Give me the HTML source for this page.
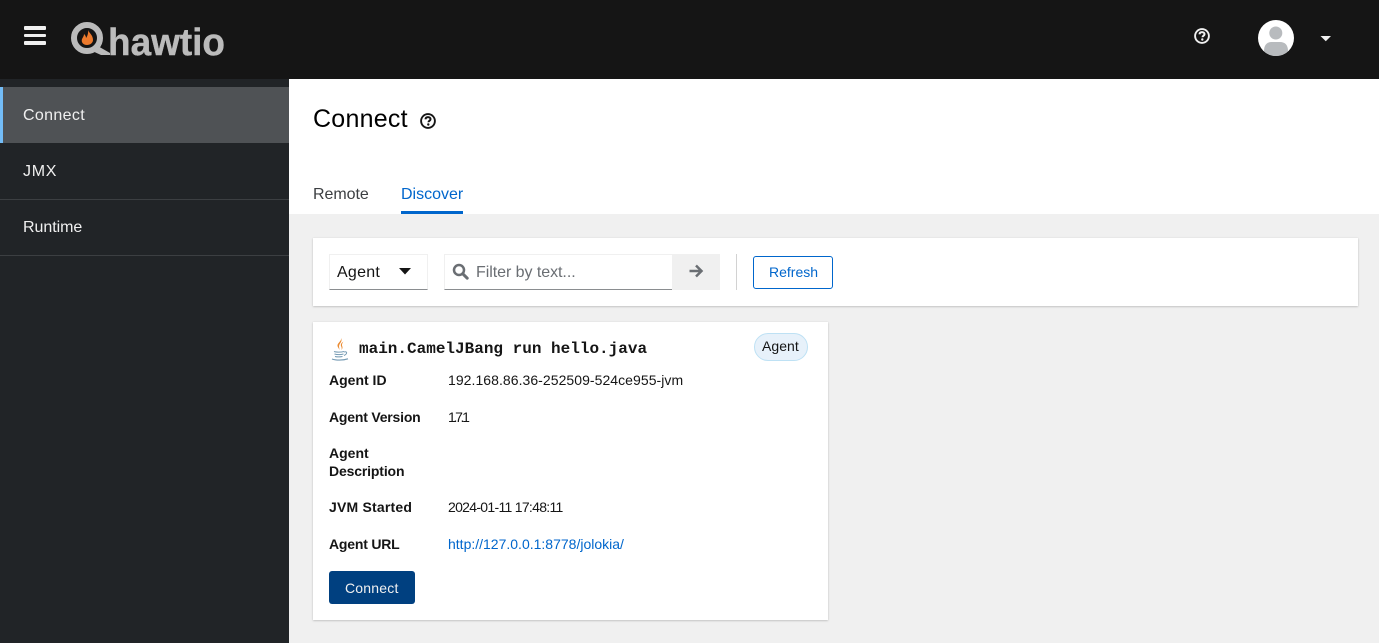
<!DOCTYPE html>
<html><head><meta charset="utf-8"><title>Hawtio Connect</title>
<style>
html,body{margin:0;padding:0}
body{width:1379px;height:643px;overflow:hidden;background:#f0f0f0;position:relative;font-family:"Liberation Sans",sans-serif;color:#151515}
.a{position:absolute;box-sizing:border-box}
.t{position:absolute;white-space:nowrap;line-height:20px;font-size:14px}
.b{font-weight:bold}
.n{color:#f0f0f0;font-size:16px;letter-spacing:.35px;left:23px;line-height:24px}
svg{position:absolute;overflow:visible}
</style></head><body>
<div class="a" style="left:0;top:0;width:1379px;height:79px;background:#151515"></div>
<div class="a" style="left:24px;top:26px;width:22px;height:3.5px;background:#f0f0f0;border-radius:1px"></div>
<div class="a" style="left:24px;top:33.5px;width:22px;height:3.5px;background:#f0f0f0;border-radius:1px"></div>
<div class="a" style="left:24px;top:41px;width:22px;height:3.5px;background:#f0f0f0;border-radius:1px"></div>

<svg style="left:0;top:0" width="300" height="79">
<circle cx="87" cy="38" r="13" fill="none" stroke="#bbb" stroke-width="6"/>
<path d="M96 45L110 53V55H101L90 50Z" fill="#bbb"/>
<path d="M88 30C89 33 93 35 93 40C93 43 90 45 87 45C83 45 81 42 82 39C83 37 84 36 84 34C85.500 35.500 86 36.500 86 38C87.500 36 88.500 33 88 30Z" fill="#ec7a2d"/>
<text x="108" y="55" font-family="Liberation Sans" font-weight="bold" font-size="38" fill="#bbb" stroke="#bbb" stroke-width=".4" textLength="117" lengthAdjust="spacingAndGlyphs">hawtio</text>
</svg>

<svg style="left:1194px;top:28px" width="16" height="16" viewBox="0 0 16 16">
<circle cx="8" cy="8" r="6.900" fill="none" stroke="#f0f0f0" stroke-width="1.900"/>
<path d="M5.500 6.300C5.600 4.800 6.700 4.100 8 4.100C9.400 4.100 10.500 4.900 10.500 6.200C10.500 7.700 8.500 7.700 8.500 9.300" fill="none" stroke="#f0f0f0" stroke-width="2"/>
<circle cx="8.300" cy="11.500" r="1.200" fill="#f0f0f0"/>
</svg>
<svg style="left:1258px;top:20px" width="36" height="36" viewBox="0 0 36 36">
<circle cx="18" cy="18" r="18" fill="#fff"/>
<circle cx="17.800" cy="13" r="6.500" fill="#b8bbbe"/>
<path d="M6 31C6 25 9 22 14 22H22C27 22 30 25 30 31C27 34.500 22 36 18 36C14 36 9 34.500 6 31Z" fill="#b8bbbe"/>
</svg>
<svg style="left:1320px;top:36px" width="12" height="6"><path d="M.5 0H11L5.800 5.200Z" fill="#f0f0f0"/></svg>

<div class="a" style="left:0;top:79px;width:289px;height:564px;background:#212427"></div>
<div class="a" style="left:0;top:87px;width:289px;height:56px;background:#4f5255;border-left:3px solid #73bcf7"></div>
<div class="a" style="left:0;top:199px;width:289px;height:1px;background:#3c3f42"></div>
<div class="a" style="left:0;top:255px;width:289px;height:1px;background:#3c3f42"></div>
<div class="t n" style="top:104px">Connect</div>
<div class="t n" style="top:160px;letter-spacing:.7px">JMX</div>
<div class="t n" style="top:216px;letter-spacing:-.05px">Runtime</div>

<div class="a" style="left:289px;top:79px;width:1090px;height:135px;background:#fff"></div>
<div class="t" style="left:313px;top:104px;font-size:25px;line-height:30px;letter-spacing:.25px;color:#000">Connect</div>
<svg style="left:420px;top:113px" width="16" height="16" viewBox="0 0 16 16">
<circle cx="8" cy="8" r="6.900" fill="none" stroke="#151515" stroke-width="1.900"/>
<path d="M5.500 6.300C5.600 4.800 6.700 4.100 8 4.100C9.400 4.100 10.500 4.900 10.500 6.200C10.500 7.700 8.500 7.700 8.500 9.300" fill="none" stroke="#151515" stroke-width="2"/>
<circle cx="8.300" cy="11.500" r="1.200" fill="#151515"/>
</svg>
<div class="t" style="left:313px;top:183px;font-size:16px;line-height:24px;letter-spacing:-.05px;color:#3c3f42">Remote</div>
<div class="t" style="left:401px;top:183px;font-size:16px;line-height:24px;letter-spacing:0;color:#06c">Discover</div>
<div class="a" style="left:401px;top:211px;width:62px;height:3px;background:#06c"></div>

<div class="a" style="left:313px;top:238px;width:1045px;height:68px;background:#fff;box-shadow:0 1px 2px rgba(3,3,3,.16),0 0 2px rgba(3,3,3,.08)"></div>
<div class="a" style="left:329px;top:254px;width:99px;height:36px;border:1px solid #f0f0f0;border-bottom-color:#8a8d90"></div>
<div class="t" style="left:337px;top:261px;font-size:16px;line-height:24px;letter-spacing:.25px">Agent</div>
<svg style="left:399px;top:268px" width="12" height="7"><path d="M0 0H12L6 6.500Z" fill="#151515"/></svg>
<div class="a" style="left:444px;top:254px;width:228px;height:36px;border:1px solid #f0f0f0;border-right:0;border-bottom-color:#8a8d90"></div>
<svg style="left:452px;top:263px" width="17" height="17" viewBox="0 0 17 17">
<circle cx="7" cy="7" r="5" fill="none" stroke="#6a6e73" stroke-width="2.500"/>
<path d="M10.800 10.800L15.200 15.200" stroke="#6a6e73" stroke-width="3" stroke-linecap="round"/>
</svg>
<div class="t" style="left:476px;top:261px;font-size:16px;line-height:24px;letter-spacing:-.05px;color:#6a6e73">Filter by text...</div>
<div class="a" style="left:672px;top:254px;width:48px;height:36px;background:#f0f0f0"></div>
<svg style="left:688px;top:263px" width="16" height="16" viewBox="0 0 16 16">
<path d="M1.500 8H13M8 2.500L13.500 8L8 13.500" fill="none" stroke="#6a6e73" stroke-width="2.500"/>
</svg>
<div class="a" style="left:736px;top:254px;width:1px;height:36px;background:#d2d2d2"></div>
<div class="a" style="left:753px;top:256px;width:80px;height:33px;border:1px solid #06c;border-radius:3px"></div>
<div class="t" style="left:769px;top:262px;color:#06c;letter-spacing:0">Refresh</div>

<div class="a" style="left:313px;top:322px;width:515px;height:298px;background:#fff;box-shadow:0 1px 2px rgba(3,3,3,.16),0 0 2px rgba(3,3,3,.08)"></div>
<svg style="left:330px;top:337px" width="20" height="25" viewBox="0 0 20 25" opacity=".8">
<path d="M11 1C12 4 7 6 7.500 9C7.800 10.500 9 11.500 9.500 13C9.500 11 8.500 9.500 9.500 7.500C10.500 5.500 12.500 4 11 1Z" fill="#e76f00"/>
<path d="M13.500 4.500C11 6 10.500 7.500 11 9C11.400 10 12 11 11.500 13C13 11 12.500 10 12 8.500C11.800 7 12.500 6 13.500 4.500Z" fill="#e76f00"/>
<path d="M4 14.500C6 15.300 11 15.300 14 14.500M4.500 17C7 17.700 11 17.700 13.500 17M5 19.500C7 20 10 20 12.500 19.500M14 15C17 14 18 16.500 14 18.500" fill="none" stroke="#5382a1" stroke-width="1"/>
<path d="M2 22C6 23.500 13 23.500 18 21.800" fill="none" stroke="#5382a1" stroke-width="1.100"/>
</svg>
<div class="t" style="left:359px;top:339px;font-family:'Liberation Mono',monospace;font-weight:bold;font-size:16px;color:#151515">main.CamelJBang run hello.java</div>
<div class="a" style="left:754px;top:333px;width:54px;height:28px;background:#e7f1fa;border:1px solid #bee1f4;border-radius:14px"></div>
<div class="t" style="left:762px;top:336px;letter-spacing:.05px;color:#151515">Agent</div>

<div class="t b" style="left:329px;top:370px">Agent ID</div>
<div class="t" style="left:448px;top:370px;letter-spacing:.05px">192.168.86.36-252509-524ce955-jvm</div>
<div class="t b" style="left:329px;top:407px;letter-spacing:-.2px">Agent Version</div>
<div class="t" style="left:448px;top:407px;letter-spacing:-2.300px">1.7.1</div>
<div class="t b" style="left:329px;top:443px">Agent</div>
<div class="t b" style="left:329px;top:461px;letter-spacing:-.15px">Description</div>
<div class="t b" style="left:329px;top:497px;letter-spacing:.2px">JVM Started</div>
<div class="t" style="left:448px;top:497px;letter-spacing:-.7px">2024-01-11 17:48:11</div>
<div class="t b" style="left:329px;top:534px;letter-spacing:-.2px">Agent URL</div>
<div class="t" style="left:448px;top:534px;letter-spacing:0;color:#06c">http://127.0.0.1:8778/jolokia/</div>
<div class="a" style="left:329px;top:571px;width:86px;height:33px;background:#004080;border-radius:3px"></div>
<div class="t" style="left:345px;top:578px;color:#f0f0f0;letter-spacing:.2px">Connect</div>
</body></html>
